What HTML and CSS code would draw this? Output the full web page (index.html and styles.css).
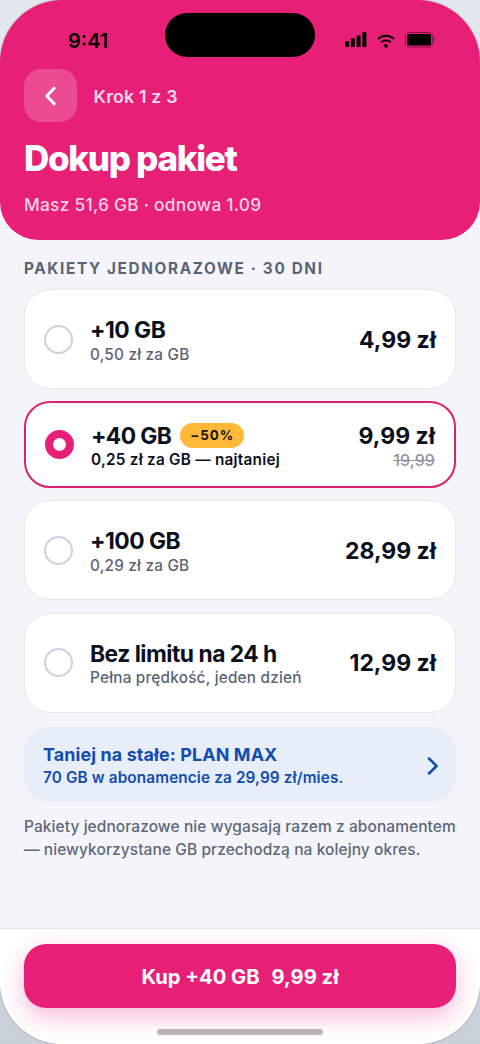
FILE: index.html
```html
<!DOCTYPE html>
<html lang="pl">
<head>
<meta charset="utf-8">
<title>Dokup pakiet</title>
<link rel="stylesheet" href="styles.css">
</head>
<body>
<main class="phone">
  <header class="header">
    <div class="status">
      <span class="time">9:41</span>
      <span class="island"></span>
      <span class="indicators">
        <svg class="signal" width="22" height="15" viewBox="0 0 22 15"><rect x="0" y="9.3" width="4" height="5.7" rx="1"/><rect x="5.8" y="6.3" width="4" height="8.7" rx="1"/><rect x="11.6" y="3.2" width="4" height="11.8" rx="1"/><rect x="17.4" y="0" width="4" height="15" rx="1"/></svg>
        <svg class="wifi" width="18" height="14" viewBox="0 0 18 14" fill="none" stroke="#000" stroke-width="1.9"><path d="M1 5.1C5.5 .7 12.5 .7 17 5.1"/><path d="M4.1 8.3C6.9 5.7 11.1 5.7 13.9 8.3"/><circle cx="9" cy="11.8" r="1.9" fill="#000" stroke="none"/></svg>
        <svg class="battery" width="31" height="16" viewBox="0 0 31 16"><rect x=".5" y=".5" width="27" height="14.5" rx="4.2" fill="none" stroke="#000" stroke-opacity=".45"/><rect x="2" y="2" width="24" height="11.5" rx="2.6"/><path d="M29 5.5q1.2.7 1.2 2.2t-1.2 2.2z" opacity=".45"/></svg>
      </span>
    </div>
    <div class="nav">
      <button class="back" aria-label="Wstecz"><svg width="28" height="28" viewBox="0 0 28 28"><path d="M18.2 6.2L10.8 14l7.4 7.8"/></svg></button>
      <span class="step">Krok 1 z 3</span>
    </div>
    <h1 class="title">Dokup pakiet</h1>
    <p class="usage">Masz 51,6 GB · odnowa 1.09</p>
  </header>
  <section class="content">
    <h2 class="label">PAKIETY JEDNORAZOWE · 30 DNI</h2>
    <div class="plans">
      <div class="plan">
        <span class="radio"></span>
        <div class="info"><div class="name">+10 GB</div><div class="rate">0,50 zł za GB</div></div>
        <div class="price">4,99 zł</div>
      </div>
      <div class="plan selected">
        <span class="radio"></span>
        <div class="info"><div class="name">+40 GB<span class="badge">−50%</span></div><div class="rate">0,25 zł za GB — najtaniej</div></div>
        <div class="price">9,99 zł<s class="old">19,99</s></div>
      </div>
      <div class="plan">
        <span class="radio"></span>
        <div class="info"><div class="name">+100 GB</div><div class="rate">0,29 zł za GB</div></div>
        <div class="price">28,99 zł</div>
      </div>
      <div class="plan">
        <span class="radio"></span>
        <div class="info"><div class="name">Bez limitu na 24 h</div><div class="rate">Pełna prędkość, jeden dzień</div></div>
        <div class="price">12,99 zł</div>
      </div>
    </div>
    <div class="offer">
      <div><div class="offer-title">Taniej na stałe: PLAN MAX</div><div class="offer-text">70 GB w abonamencie za 29,99 zł/mies.</div></div>
      <svg width="12" height="18" viewBox="0 0 12 18"><path d="M2 1.5L9.5 9 2 16.5"/></svg>
    </div>
    <p class="note">Pakiety jednorazowe nie wygasają razem z abonamentem<br>— niewykorzystane GB przechodzą na kolejny okres.</p>
  </section>
  <footer class="footer">
    <button class="buy"><span>Kup +40 GB</span><span>9,99 zł</span></button>
    <span class="home"></span>
  </footer>
</main>
</body>
</html>
```
FILE: styles.css
```css
* { box-sizing: border-box; }
body {
  margin: 0;
  background: linear-gradient(180deg, #e3e8ef, #c9d0da);
  font-family: Inter, "Liberation Sans", sans-serif;
  color: #0b1020;
}
h1, h2, p { margin: 0; }
button { border: 0; padding: 0; font-family: inherit; color: #fff; }
.phone {
  width: 480px;
  height: 1044px;
  display: flex;
  flex-direction: column;
  overflow: hidden;
  border-radius: 62px;
  background: #f3f5fa;
  box-shadow: 0 0 2px #0006;
}
.header {
  height: 240px;
  flex: none;
  padding: 13px 24px 0;
  background: #e81f76;
  border-radius: 0 0 38px 38px;
  color: #fff;
}
.status { display: grid; grid-template-columns: 141px 150px 141px; height: 56px; }
.time { padding: 16px 0 0 44px; font-size: 20px; line-height: 25px; font-weight: 600; color: #000; }
.island { height: 44px; border-radius: 22px; background: #000; }
.indicators { display: flex; padding: 19px 0 0 30px; }
.signal { margin-top: 0; }
.wifi { margin: 2px 0 0 10px; }
.battery { margin-left: 10px; }
.nav { display: flex; align-items: center; gap: 17px; height: 53px; }
.back { width: 52.5px; height: 53px; border-radius: 17px; background: #ffffff33; display: grid; place-items: center; }
.back path { fill: none; stroke: #fff; stroke-width: 3; stroke-linecap: round; stroke-linejoin: round; }
.step { padding-top: 2px; font-size: 17.7px; font-weight: 600; letter-spacing: .22px; color: #ffd9eb; }
.title { margin-top: 14px; font-size: 35px; line-height: 44px; font-weight: 800; letter-spacing: -1.3px; }
.usage { margin-top: 13px; font-size: 17.3px; line-height: 24px; font-weight: 500; letter-spacing: .27px; color: #ffd2e7; }
.content { flex: 1; padding: 19px 24px 0; }
.label { font-size: 15.3px; line-height: 20px; font-weight: 700; letter-spacing: 1.65px; color: #5b6475; }
.plans { display: flex; flex-direction: column; gap: 12.2px; margin-top: 10px; }
.plan {
  height: 100.3px;
  display: flex;
  align-items: center;
  padding: 1px 19px 0;
  border: 1.2px solid #e3e8f1;
  border-radius: 26px;
  background: #fff;
}
.plan.selected { height: 86.5px; border: 2.4px solid #da216f; }
.radio { width: 29px; height: 29px; flex: none; border: 2.4px solid #cbd2e0; border-radius: 50%; margin-top: -1px; }
.selected .radio { border: 8.5px solid #e81f76; }
.info { flex: 1; margin-left: 17px; }
.name { display: flex; align-items: center; height: 30px; font-size: 22.8px; font-weight: 700; letter-spacing: -.5px; white-space: nowrap; }
.selected .name { height: 28px; letter-spacing: -.6px; }
.selected .info { padding-top: 1px; }
.rate { font-size: 15.3px; line-height: 20px; font-weight: 500; letter-spacing: .22px; color: #5b6475; white-space: nowrap; }
.selected .rate { padding-top: 1px; font-weight: 600; letter-spacing: .25px; color: #0b1020; }
.badge { margin-left: 9px; padding: 0 10px; border-radius: 13px; background: #ffb938; color: #16120a; font-size: 13.3px; line-height: 25px; letter-spacing: 1px; }
.price { font-size: 23px; line-height: 30px; font-weight: 700; letter-spacing: 0; text-align: right; }
.old { display: block; font-size: 16px; line-height: 18px; font-weight: 500; letter-spacing: .1px; color: #8c94a5; }
.offer { display: flex; align-items: center; justify-content: space-between; height: 75.5px; margin-top: 14px; padding: 2px 17px 0 19px; border-radius: 24px; background: #e7eefa; color: #124cb0; }
.offer-title { font-size: 17.9px; line-height: 24px; font-weight: 700; letter-spacing: .12px; }
.offer-text { font-size: 15.3px; line-height: 22px; font-weight: 600; letter-spacing: .14px; }
.offer path { fill: none; stroke: #124cb0; stroke-width: 2.5; stroke-linecap: round; stroke-linejoin: round; }
.note { margin-top: 13.4px; font-size: 15.5px; line-height: 22.7px; font-weight: 500; letter-spacing: .08px; color: #5f6778; white-space: nowrap; }
.footer { height: 116px; flex: none; padding: 15px 24px 0; border-top: 1px solid #e3e8f1; background: #fff; display: flex; flex-direction: column; align-items: center; }
.buy { width: 432px; height: 64px; flex: none; display: flex; align-items: center; justify-content: center; gap: 12px; padding-top: 1px; border-radius: 22px; background: #e81f76; box-shadow: 0 9px 24px #e81f764d; font-size: 20.2px; font-weight: 700; }
.home { width: 166px; height: 6px; margin-top: 20.5px; border-radius: 3px; background: #bbb6b8; z-index: 1; }
```
